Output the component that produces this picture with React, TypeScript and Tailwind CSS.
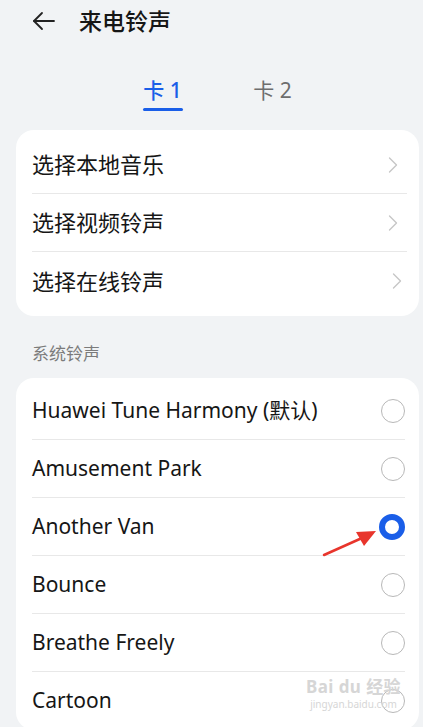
import { ChevronRight } from 'lucide-react';

const ENTRIES = ['选择本地音乐', '选择视频铃声', '选择在线铃声'];

const TONES = [
  { name: 'Huawei Tune Harmony (默认)', checked: false },
  { name: 'Amusement Park', checked: false },
  { name: 'Another Van', checked: true },
  { name: 'Bounce', checked: false },
  { name: 'Breathe Freely', checked: false },
  { name: 'Cartoon', checked: false },
];

const FONT = { fontFamily: '"Noto Sans", "Noto Sans CJK SC", sans-serif' };

function Radio({ checked }: { checked: boolean }) {
  if (checked) {
    return <span className="block w-[26px] h-[26px] rounded-full border-[6px] border-[#1a5ee8] bg-white" />;
  }
  return <span className="block w-[24px] h-[24px] rounded-full border-[1.5px] border-[#b8b8b8] bg-white" />;
}

export default function App() {
  return (
    <div className="relative w-[423px] h-[727px] overflow-hidden bg-[#f1f3f5] text-[#161616]" style={FONT}>
      {/* Header */}
      <div className="flex items-center h-[42px] pl-[32px]">
        <svg width="24" height="24" viewBox="0 0 24 24" fill="none" stroke="#222" strokeWidth="1.8" strokeLinecap="round" strokeLinejoin="round">
          <path d="M22 12H2" />
          <path d="M10 4l-8 8 8 8" />
        </svg>
        <span className="ml-[23px] text-[23px] font-medium leading-none">来电铃声</span>
      </div>

      {/* Tabs */}
      <div className="flex justify-center gap-[70px] mt-[34px] pl-[12px]">
        <div className="flex flex-col items-center">
          <span className="text-[21px] leading-[28px] text-[#1a5ee8] font-medium">卡 1</span>
          <span className="mt-[4px] w-[40px] h-[3px] rounded-full bg-[#1a5ee8]" />
        </div>
        <div className="flex flex-col items-center">
          <span className="text-[21px] leading-[28px] text-[#6d6d6d]">卡 2</span>
          <span className="mt-[4px] w-[40px] h-[3px]" />
        </div>
      </div>

      {/* Pick source card */}
      <div className="ml-[16px] mr-[4px] mt-[19px] rounded-[18px] bg-white py-[6px] pl-[16px] pr-[8px]">
        {ENTRIES.map((e, i) => (
          <div key={e} className={`flex items-center h-[58px] ${i < ENTRIES.length - 1 ? 'border-b border-[#e8e8e8] mr-[4px]' : ''}`}>
            <span className="flex-1 text-[22px]">{e}</span>
            <ChevronRight className="w-[28px] h-[28px] text-[#c6c6c6]" strokeWidth={1.2} />
          </div>
        ))}
      </div>

      {/* System tones */}
      <div className="pl-[32px] mt-[26px] text-[17px] leading-[24px] text-[#7b7b7b]">系统铃声</div>
      <div className="ml-[16px] mr-[4px] mt-[12px] rounded-[18px] bg-white pt-[4px] pl-[16px] pr-[14px]">
        {TONES.map((t, i) => (
          <div key={t.name} className={`flex items-center h-[58px] ${i < TONES.length - 1 ? 'border-b border-[#e8e8e8]' : ''}`}>
            <span className="flex-1 text-[21px]">{t.name}</span>
            <Radio checked={t.checked} />
          </div>
        ))}
      </div>

      {/* annotation arrow */}
      <svg className="absolute left-[320px] top-[526px]" width="60" height="34" viewBox="0 0 60 34">
        <path d="M4 29 L42 12" stroke="#e8352c" strokeWidth="2.5" strokeLinecap="round" />
        <path d="M56 5 L36 6 L44 20 Z" fill="#e8352c" />
      </svg>

      {/* watermark */}
      <div className="absolute left-[306px] top-[678px] flex flex-col items-center text-[#d6d6d6] leading-none">
        <span className="text-[17px] font-bold tracking-wide">Bai du 经验</span>
        <span className="mt-[4px] text-[10px]">jingyan.baidu.com</span>
      </div>
    </div>
  );
}
